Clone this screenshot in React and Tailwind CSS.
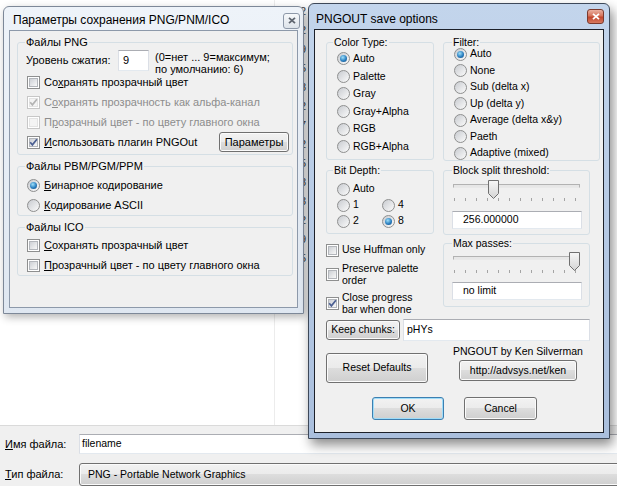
import React from 'react';

function Check({ checked, disabled }) {
  return (
    <span className={`relative shrink-0 w-[13px] h-[13px] border p-[1px] bg-white ${disabled ? 'border-[#c7c7c7]' : 'border-[#8e8f8f]'}`}>
      <span className={`block w-full h-full border ${disabled ? 'border-[#e3e3e3] bg-[#f4f4f4]' : 'border-[#b3b6bb] bg-[linear-gradient(135deg,#cdd0d5,#f8f8f8)]'}`} />
      {checked && (
        <svg className="absolute left-[-1px] top-[-1px]" width="13" height="13" viewBox="0 0 13 13">
          <path d="M3.2 6.3 L5.4 8.9 L9.9 3.3" fill="none" stroke={disabled ? '#b4b4b4' : '#4b5f92'} strokeWidth="1.7" />
        </svg>
      )}
    </span>
  );
}

function Radio({ checked }) {
  return (
    <span className="relative shrink-0 w-[13px] h-[13px] rounded-full border border-[#8e8f8f] bg-[linear-gradient(135deg,#c8cbd0,#fbfbfb)]">
      {checked && (
        <span className="absolute left-[2px] top-[2px] w-[7px] h-[7px] rounded-full bg-[radial-gradient(circle_at_40%_35%,#9fe0fa,#2a7fc0_55%,#124579)]" />
      )}
    </span>
  );
}

function Btn({ children, className = '', focused }) {
  return (
    <div
      className={`flex items-center justify-center rounded-[3px] border bg-[linear-gradient(#f2f2f2,#ebebeb_50%,#dddddd_50%,#cfcfcf)] ${
        focused ? 'border-[#3c7fb1] shadow-[inset_0_0_0_1px_#9fdcf8]' : 'border-[#707070] shadow-[inset_0_0_0_1px_#fbfbfb]'
      } ${className}`}
    >
      {children}
    </div>
  );
}

function Field({ children, className = '' }) {
  return (
    <div className={`flex items-center bg-white border border-[#abadb3] border-x-[#dbdfe6] border-b-[#e3e9ef] ${className}`}>
      {children}
    </div>
  );
}

function Group({ label, labelLeft = 'left-[7px]', className = '', children }) {
  return (
    <div className={`relative shrink-0 rounded-[3px] border border-[#d5dfe5] ${className}`}>
      <span className={`absolute top-[-7px] px-[1px] leading-[13px] bg-[#f0f0f0] whitespace-nowrap ${labelLeft}`}>{label}</span>
      {children}
    </div>
  );
}

function Slider({ thumb }) {
  return (
    <div className="relative w-[127px] h-[26px]">
      <div className="absolute left-0 right-0 top-[6px] h-[4px] border border-[#b2b2b2] border-b-[#e9e9e9] bg-[#e7e7e7]" />
      <div className="absolute left-[1px] right-[4px] top-[20px] flex justify-between">
        {[0, 1, 2, 3, 4, 5, 6, 7, 8, 9, 10, 11].map((i) => (
          <span key={i} className="w-px h-[3px] bg-[#a4a4a4]" />
        ))}
      </div>
      <svg className={`absolute top-[2px] ${thumb}`} width="11" height="19" viewBox="0 0 11 19">
        <defs>
          <linearGradient id="thumbg" x1="0" y1="0" x2="0" y2="1">
            <stop offset="0" stopColor="#f7f7f7" />
            <stop offset="1" stopColor="#d4d4d4" />
          </linearGradient>
        </defs>
        <path d="M0.5 0.5 H10.5 V13.5 L5.5 18.5 L0.5 13.5 Z" fill="url(#thumbg)" stroke="#707070" />
      </svg>
    </div>
  );
}

function CloseX({ color }) {
  return (
    <svg width="8" height="7" viewBox="0 0 8 7">
      <path d="M1 0.8 L7 6.2 M7 0.8 L1 6.2" stroke={color} strokeWidth="1.8" />
    </svg>
  );
}

function Background() {
  const rows = ['2', '2', '9', '5', '8', '2', '7', '2', '5', '8', '3', '2', '9', '5'];
  return (
    <div className="absolute inset-0 flex flex-col">
      <div className="h-[425px] flex bg-white">
        <div className="w-[275px] border-r border-[#ececec]" />
        <div className="pl-[25px] pt-[2px] flex flex-col text-[11px] leading-[19px] text-[#444]">
          {rows.map((r, i) => (
            <span key={i}>{r}</span>
          ))}
        </div>
      </div>
      <div className="flex-1 flex flex-col pt-[8px] bg-[#f0f0f0] border-t border-[#dadada] text-[11px]">
        <div className="h-[20px] flex items-center">
          <span className="w-[79px] pl-[5px]"><u>И</u>мя файла:</span>
          <Field className="flex-1 h-[20px] -mr-[4px] pl-[2px] text-[10.5px]">filename</Field>
        </div>
        <div className="mt-[9px] h-[23px] flex items-center">
          <span className="w-[79px] pl-[5px]"><u>Т</u>ип файла:</span>
          <Btn className="flex-1 h-[23px] -mr-[4px] !justify-start pl-[8px] text-[10.5px]">PNG - Portable Network Graphics</Btn>
        </div>
      </div>
    </div>
  );
}

function CheckRow({ checked, disabled, children, className = '' }) {
  return (
    <div className={`h-[20px] flex items-center gap-[4px] ${disabled ? 'text-[#8d8d8d]' : ''} ${className}`}>
      <Check checked={checked} disabled={disabled} />
      <span className="whitespace-nowrap">{children}</span>
    </div>
  );
}

function RadioRow({ checked, children }) {
  return (
    <div className="h-[20px] flex items-center gap-[4px]">
      <Radio checked={checked} />
      <span className="whitespace-nowrap">{children}</span>
    </div>
  );
}

function LeftDialog() {
  return (
    <div className="absolute left-[3px] top-[6px] w-[301px] h-[308px] flex flex-col rounded-t-[6px] border border-[#7d8898] bg-[linear-gradient(#eef3f9,#dfe7f1)] px-[5px] pb-[5px] shadow-[2px_3px_8px_rgba(0,0,0,0.3)]">
      <div className="h-[23px] flex items-center justify-between">
        <span className="pl-[4px] pt-[2px] text-[12px] whitespace-nowrap">Параметры сохранения PNG/PNM/ICO</span>
        <span className="-mr-[2px] mt-[4px] w-[17px] h-[16px] rounded-[3px] border border-[#8d98a8] bg-[linear-gradient(#f7f9fb,#dde3ea)] flex items-center justify-center">
          <CloseX color="#5f6670" />
        </span>
      </div>
      <div className="flex-1 flex flex-col border border-[#8d99aa] bg-[#f0f0f0] text-[11px]">
        <Group label="Файлы PNG" className="mt-[11px] ml-[7px] w-[276px] pt-[7px] pl-[9px] pr-[3px] pb-[2px]">
          <div className="h-[20px] flex items-start -ml-[1px]">
            <span className="w-[92px] h-[20px] flex items-center whitespace-nowrap">Уровень сжатия:</span>
            <Field className="w-[31px] h-[21px] pl-[4px]">9</Field>
            <div className="ml-[6px] mt-[1px] leading-[12px] whitespace-nowrap">
              <div>(0=нет ... 9=максимум;</div>
              <div>по умолчанию: 6)</div>
            </div>
          </div>
          <CheckRow className="mt-[2px]">Со<u>х</u>ранять прозрачный цвет</CheckRow>
          <CheckRow checked disabled>С<u>о</u>хранять прозрачность как альфа-канал</CheckRow>
          <CheckRow disabled>П<u>р</u>озрачный цвет - по цвету главного окна</CheckRow>
          <div className="h-[20px] flex items-center">
            <CheckRow checked><u>И</u>спользовать плагин PNGOut</CheckRow>
            <Btn className="ml-auto w-[70px] h-[20px]">Параметры</Btn>
          </div>
        </Group>
        <Group label="Файлы PBM/PGM/PPM" className="mt-[11px] ml-[7px] w-[276px] pt-[8px] pl-[9px]">
          <RadioRow checked><u>Б</u>инарное кодирование</RadioRow>
          <RadioRow><u>К</u>одирование ASCII</RadioRow>
        </Group>
        <Group label="Файлы ICO" className="mt-[11px] ml-[7px] w-[276px] pt-[7px] pl-[9px]">
          <CheckRow><u>С</u>охранять прозрачный цвет</CheckRow>
          <CheckRow><u>П</u>розрачный цвет - по цвету главного окна</CheckRow>
        </Group>
      </div>
    </div>
  );
}

function SmallRadio({ checked, children, className = 'h-[17.6px]' }) {
  return (
    <div className={`flex items-center gap-[3px] ${className}`}>
      <Radio checked={checked} />
      <span className="whitespace-nowrap">{children}</span>
    </div>
  );
}

function RightDialog() {
  return (
    <div className="absolute left-[308px] top-[3px] w-[302px] h-[436px] flex flex-col rounded-t-[6px] border border-[#3d4859] bg-[linear-gradient(#c3d5ec,#aabfdd)] px-[5px] pb-[5px] shadow-[3px_6px_12px_rgba(0,0,0,0.45)]">
      <div className="h-[25px] flex items-center justify-between">
        <span className="pl-[2px] pt-[4px] text-[12px] whitespace-nowrap">PNGOUT save options</span>
        <span className="mt-[-1px] w-[17px] h-[15px] rounded-[3px] border border-[#7b3a2e] bg-[linear-gradient(#eab0a0,#d5735b_45%,#c2462d_55%,#d77a60)] flex items-center justify-center">
          <CloseX color="#ffffff" />
        </span>
      </div>
      <div className="flex-1 flex flex-col border border-[#1c2029] bg-[#f0f0f0] text-[10.5px]">
        <div className="mt-[12px] flex items-start">
          <Group label="Color Type:" labelLeft="left-[6px]" className="ml-[11px] w-[108px] h-[118px] pt-[7px] pl-[10px]">
            <SmallRadio checked>Auto</SmallRadio>
            <SmallRadio>Palette</SmallRadio>
            <SmallRadio>Gray</SmallRadio>
            <SmallRadio>Gray+Alpha</SmallRadio>
            <SmallRadio>RGB</SmallRadio>
            <SmallRadio>RGB+Alpha</SmallRadio>
          </Group>
          <Group label="Filter:" labelLeft="left-[8px]" className="ml-[9px] w-[157px] h-[119px] pt-[3px] pl-[10px]">
            <SmallRadio checked className="h-[16.5px]">Auto</SmallRadio>
            <SmallRadio className="h-[16.5px]">None</SmallRadio>
            <SmallRadio className="h-[16.5px]">Sub (delta x)</SmallRadio>
            <SmallRadio className="h-[16.5px]">Up (delta y)</SmallRadio>
            <SmallRadio className="h-[16.5px]">Average (delta x&amp;y)</SmallRadio>
            <SmallRadio className="h-[16.5px]">Paeth</SmallRadio>
            <SmallRadio className="h-[16.5px]">Adaptive (mixed)</SmallRadio>
          </Group>
        </div>
        <div className="mt-[9px] flex items-start">
          <Group label="Bit Depth:" labelLeft="left-[6px]" className="ml-[11px] w-[108px] h-[64px] pt-[10px] pl-[10px]">
            <SmallRadio className="h-[16px]">Auto</SmallRadio>
            <div className="grid grid-cols-[45px_45px]">
              <SmallRadio className="h-[16px]">1</SmallRadio>
              <SmallRadio className="h-[16px]">4</SmallRadio>
              <SmallRadio className="h-[16px]">2</SmallRadio>
              <SmallRadio checked className="h-[16px]">8</SmallRadio>
            </div>
          </Group>
          <Group label="Block split threshold:" labelLeft="left-[8px]" className="ml-[9px] w-[147px] h-[65px] pt-[7px] pl-[9px]">
            <Slider thumb="left-[35px]" />
            <Field className="mt-[7px] -ml-[1px] w-[130px] h-[18px] pl-[10px]">256.000000</Field>
          </Group>
        </div>
        <div className="mt-[8px] flex items-start">
          <div className="ml-[11px] w-[108px] flex flex-col">
            <div className="h-[14px] flex items-center gap-[3px]">
              <Check />
              <span className="whitespace-nowrap">Use Huffman only</span>
            </div>
            <div className="mt-[5px] flex items-center gap-[3px]">
              <Check />
              <span className="leading-[12px] whitespace-nowrap">Preserve palette<br />order</span>
            </div>
            <div className="mt-[5px] flex items-center gap-[3px]">
              <Check checked />
              <span className="leading-[12px] whitespace-nowrap">Close progress<br />bar when done</span>
            </div>
          </div>
          <Group label="Max passes:" labelLeft="left-[8px]" className="ml-[9px] w-[147px] h-[64px] pt-[6px] pl-[9px]">
            <Slider thumb="left-[116px]" />
            <Field className="mt-[6px] -ml-[1px] w-[130px] h-[18px] pl-[10px]">no limit</Field>
          </Group>
        </div>
        <div className="mt-[4px] h-[22px] flex items-center">
          <Btn className="ml-[11px] w-[74px] h-[20px]">Keep chunks:</Btn>
          <Field className="ml-[3px] w-[187px] h-[22px] pl-[3px]">pHYs</Field>
        </div>
        <div className="mt-[4px] flex items-start">
          <Btn className="ml-[11px] mt-[8px] w-[102px] h-[30px]">Reset Defaults</Btn>
          <div className="ml-[20px] w-[140px] flex flex-col items-center">
            <span className="leading-[12px] whitespace-nowrap">PNGOUT by Ken Silverman</span>
            <Btn className="mt-[3px] w-[118px] h-[21px]">http://advsys.net/ken</Btn>
          </div>
        </div>
        <div className="mt-[14px] flex">
          <Btn focused className="ml-[57px] w-[72px] h-[23px]">OK</Btn>
          <Btn className="ml-[20px] w-[73px] h-[23px]">Cancel</Btn>
        </div>
      </div>
    </div>
  );
}

export default function App() {
  return (
    <div className="relative w-[617px] h-[486px] overflow-hidden bg-white text-black font-['Liberation_Sans',Arial,sans-serif]">
      <Background />
      <LeftDialog />
      <RightDialog />
    </div>
  );
}
